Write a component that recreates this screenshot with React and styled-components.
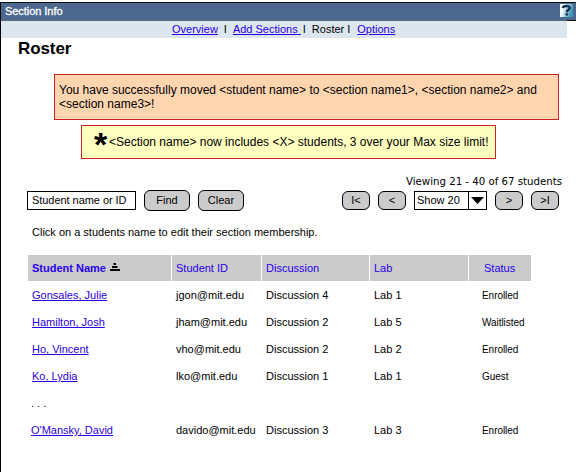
import React from "react";
import styled, { createGlobalStyle } from "styled-components";

const GlobalStyle = createGlobalStyle`
  html, body { margin: 0; background: #fff; }
  body { font-family: "Liberation Sans", Arial, sans-serif; font-size: 11px; line-height: 13px; color: #000; }
  *, *::before, *::after { box-sizing: border-box; }
`;

const Page = styled.div`
  height: 470px;
  margin-top: 2px;
  border-left: 1px solid #000;
  overflow: hidden;
`;

const TitleBar = styled.header`
  display: flex;
  align-items: center;
  justify-content: space-between;
  height: 19px;
  padding: 0 3px 1px 4px;
  border-top: 1px solid #111;
  background:
    linear-gradient(to right, #5c6777 566px, #111 566px) bottom / 100% 1px no-repeat,
    #4d688f;
  color: #fff;
`;

const TitleText = styled.span`
  letter-spacing: -0.05px;
  -webkit-text-stroke: 0.3px #fff;
`;

const HelpIcon = styled.svg`
  display: block;
  width: 13px;
  height: 13px;
  margin-bottom: 2px;
`;

const Nav = styled.nav`
  display: flex;
  width: 566px;
  height: 17px;
  padding: 2px 0 0 171px;
  background: #dce6ee;
  white-space: pre;
`;

const NavItem = styled.span`
  margin-left: ${(p) => p.$gap || 0}px;
`;

const Link = styled.a`
  color: #2a00e0;
  text-decoration: underline;
  text-decoration-thickness: 1px;
  text-underline-offset: 1px;
  margin-left: ${(p) => p.$gap || 0}px;
`;

const Heading = styled.h1`
  margin: 0;
  padding-left: 17px;
  font-size: 17px;
  line-height: 22px;
  letter-spacing: -0.1px;
`;

const Notice = styled.div`
  width: 505px;
  height: 46px;
  margin: 14px 0 0 53px;
  padding: 8px 4px;
  border: 1px solid #cc2222;
  background: #ffd5b0;
  font-size: 12px;
  line-height: 14px;
`;

const Warning = styled.div`
  display: flex;
  align-items: center;
  width: 415px;
  height: 34px;
  margin: 5px 0 0 80px;
  padding-left: 12px;
  border: 1px solid #cc2222;
  background: #ffffc0;
  font-size: 12px;
  white-space: nowrap;
`;

const Star = styled.span`
  width: 15px;
  height: 34px;
  font-size: 34px;
  line-height: 38px;
  font-weight: bold;
`;

const Viewing = styled.div`
  margin: 16px 14px 0 0;
  font-family: "DejaVu Sans", Verdana, sans-serif;
  font-size: 10.2px;
  text-align: right;
  white-space: nowrap;
`;

const Controls = styled.div`
  display: flex;
  align-items: center;
  gap: 8px;
  height: 21px;
  margin: 2px 17px 0 26px;
`;

const SearchBox = styled.div`
  width: 109px;
  height: 19px;
  padding: 2px 0 0 4px;
  border: 1px solid #000;
  letter-spacing: -0.05px;
`;

const Button = styled.button`
  width: 46px;
  height: 21px;
  padding: 0;
  border: 1px solid #000;
  border-radius: 6px;
  background: #cbcbcb;
  color: #000;
  font: inherit;
`;

const PageButton = styled(Button)`
  width: 28px;
  height: 19px;
`;

const Pager = styled.div`
  display: flex;
  gap: 8px;
  margin-left: auto;
`;

const Select = styled.div`
  display: flex;
  width: 73px;
  height: 19px;
  border: 1px solid #000;
`;

const SelectValue = styled.span`
  flex: 1;
  padding: 2px 0 0 2px;
`;

const SelectArrow = styled.span`
  display: flex;
  align-items: center;
  justify-content: center;
  width: 18px;
  border-left: 1px solid #000;
`;

const Hint = styled.p`
  margin: 15px 0 0 31px;
`;

const Table = styled.div`
  width: 503px;
  margin: 16px 0 0 27px;
`;

const Row = styled.div`
  display: grid;
  grid-template-columns: 144px 90px 108px 99px 62px;
  height: 27px;
  padding-top: 2px;
  align-items: center;
`;

const HeadRow = styled(Row)`
  height: 26px;
  padding-top: 0;
  background: #cbcbcb;
  color: #2a00ee;
`;

const HeadCell = styled.div`
  display: flex;
  align-items: center;
  gap: 4px;
  height: 26px;
  padding-left: ${(p) => p.$inset || 4}px;
  font-weight: ${(p) => (p.$sorted ? "bold" : "normal")};
  border-right: ${(p) => (p.$last ? "none" : "1px solid #fff")};
`;

const SortIcon = styled.svg`
  width: 10px;
  height: 8px;
  margin-bottom: 2px;
`;

const Cell = styled.div`
  padding-left: ${(p) => p.$inset || 4}px;
  white-space: nowrap;
`;

const StatusCell = styled(Cell)`
  font-size: 10px;
  letter-spacing: -0.05px;
`;

const rows = [
  ["Gonsales, Julie", "jgon@mit.edu", "Discussion 4", "Lab 1", "Enrolled"],
  ["Hamilton, Josh", "jham@mit.edu", "Discussion 2", "Lab 5", "Waitlisted"],
  ["Ho, Vincent", "vho@mit.edu", "Discussion 2", "Lab 2", "Enrolled"],
  ["Ko, Lydia", "lko@mit.edu", "Discussion 1", "Lab 1", "Guest"],
  null,
  ["O'Mansky, David", "davido@mit.edu", "Discussion 3", "Lab 3", "Enrolled"],
];

function StudentRow({ data, inset }) {
  if (!data) {
    return (
      <Row>
        <Cell $inset={3}>. . .</Cell>
      </Row>
    );
  }
  const [name, id, discussion, lab, status] = data;
  return (
    <Row>
      <Cell $inset={inset}><Link>{name}</Link></Cell>
      <Cell>{id}</Cell>
      <Cell>{discussion}</Cell>
      <Cell>{lab}</Cell>
      <StatusCell $inset={13}>{status}</StatusCell>
    </Row>
  );
}

export default function App() {
  return (
    <>
      <GlobalStyle />
      <Page>
        <TitleBar>
          <TitleText>Section Info</TitleText>
          <HelpIcon viewBox="0 0 13 13">
            <defs>
              <linearGradient id="help" x1="0" y1="0" x2="1" y2="0.3">
                <stop offset="0.3" stopColor="#f4fbfd" />
                <stop offset="1" stopColor="#3d93b8" />
              </linearGradient>
            </defs>
            <rect width="13" height="13" fill="url(#help)" />
            <path d="M2.8 4C3.2 1.5 10 1.2 9.8 4C9.7 5.8 6.8 5.8 6.8 8.2" fill="none" stroke="#12304f" strokeWidth="2.3" />
            <rect x="5.6" y="9.3" width="2.5" height="2.2" fill="#12304f" />
          </HelpIcon>
        </TitleBar>
        <Nav>
          <Link>Overview</Link>
          <NavItem $gap={6}>I</NavItem>
          <Link $gap={6}>{"Add Sections "}</Link>
          <NavItem $gap={2}>I</NavItem>
          <NavItem $gap={6}>Roster</NavItem>
          <NavItem $gap={3}>I</NavItem>
          <Link $gap={7}>Options</Link>
        </Nav>
        <Heading>Roster</Heading>
        <Notice>
          You have successfully moved &lt;student name&gt; to &lt;section name1&gt;, &lt;section name2&gt; and &lt;section name3&gt;!
        </Notice>
        <Warning>
          <Star>*</Star>
          &lt;Section name&gt; now includes &lt;X&gt; students, 3 over your Max size limit!
        </Warning>
        <Viewing>Viewing 21 - 40 of 67 students</Viewing>
        <Controls>
          <SearchBox>Student name or ID</SearchBox>
          <Button>Find</Button>
          <Button>Clear</Button>
          <Pager>
            <PageButton>I&lt;</PageButton>
            <PageButton>&lt;</PageButton>
            <Select>
              <SelectValue>Show 20</SelectValue>
              <SelectArrow>
                <svg width="13" height="7" viewBox="0 0 13 7">
                  <path d="M0 0H13L6.5 7Z" />
                </svg>
              </SelectArrow>
            </Select>
            <PageButton>&gt;</PageButton>
            <PageButton>&gt;I</PageButton>
          </Pager>
        </Controls>
        <Hint>Click on a students name to edit their section membership.</Hint>
        <Table>
          <HeadRow>
            <HeadCell $sorted>
              Student Name
              <SortIcon viewBox="0 0 10 8">
                <path d="M3.5 0H6V2H3.5ZM2 3H7.5V5H2ZM0 6H10V8H0Z" fill="#000" />
              </SortIcon>
            </HeadCell>
            <HeadCell>Student ID</HeadCell>
            <HeadCell>Discussion</HeadCell>
            <HeadCell>Lab</HeadCell>
            <HeadCell $inset={15} $last>Status</HeadCell>
          </HeadRow>
          {rows.map((r, i) => (
            <StudentRow key={i} data={r} inset={i === rows.length - 1 ? 3 : 4} />
          ))}
        </Table>
      </Page>
    </>
  );
}
